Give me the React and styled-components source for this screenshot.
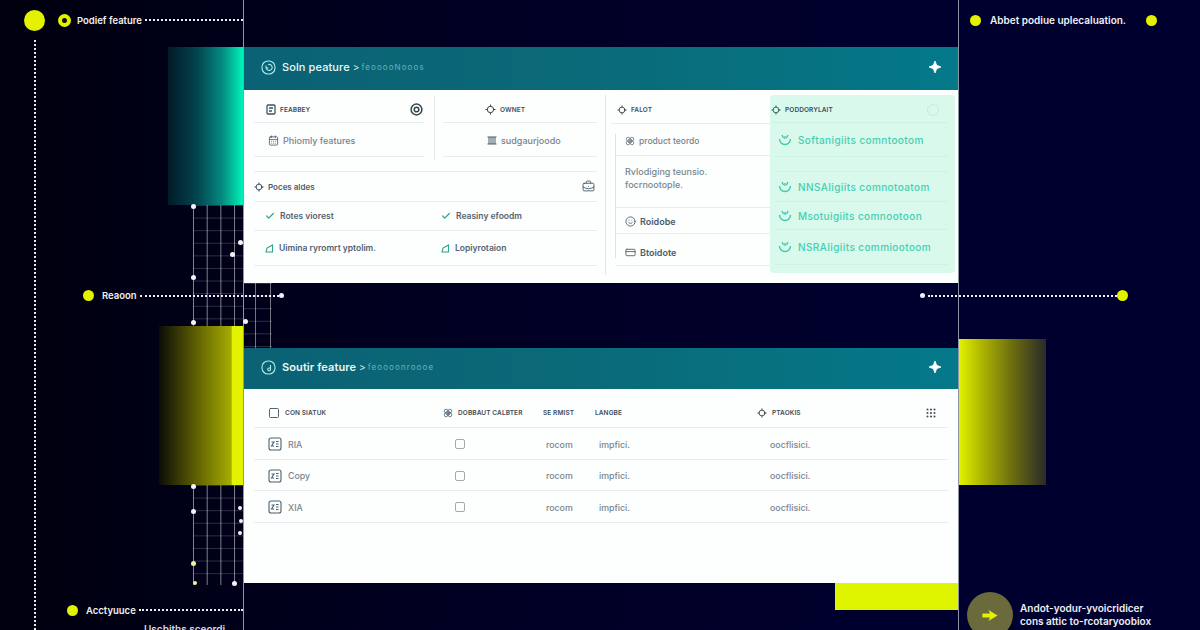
import React from 'react';
import styled, { createGlobalStyle } from 'styled-components';
import {
  BriefcaseBusiness,
  CalendarDays,
  Check,
  CreditCard,
  Flower,
  Grip,
  Locate,
  Smile,
  Square,
} from 'lucide-react';

const GlobalStyle = createGlobalStyle`
  html, body {
    margin: 0;
    padding: 0;
    background: #00001c;
  }
  * {
    box-sizing: border-box;
  }
`;

const Sparkle = () => (
  <svg width="12" height="12" viewBox="0 0 12 12">
    <path d="M6 0 L7.7 4.3 L12 6 L7.7 7.7 L6 12 L4.3 7.7 L0 6 L4.3 4.3 Z" fill="#fff" stroke="#fff" strokeWidth="0.8" strokeLinejoin="round" />
  </svg>
);

const HeaderGlyph = ({ spin }) => (
  <svg width="15" height="15" viewBox="0 0 15 15" fill="none" stroke="#a9ecec" strokeWidth="1.1">
    <rect x="1" y="1" width="13" height="13" rx="6" />
    {spin ? (
      <path d="M5 5.5 L5 8 L7.5 8 M5.2 7.8 A3 3 0 1 0 7.2 4.6" />
    ) : (
      <path d="M9.5 5 V9 A1.4 1.4 0 1 1 8.2 8 H9.5" />
    )}
  </svg>
);

const TargetGlyph = () => (
  <svg width="13" height="13" viewBox="0 0 13 13" fill="none" stroke="#34474f" strokeWidth="1.5">
    <circle cx="6.5" cy="6.5" r="5.4" />
    <circle cx="6.5" cy="6.5" r="2.3" />
  </svg>
);

const DocGlyph = () => (
  <svg width="10" height="11" viewBox="0 0 10 11" fill="none" stroke="#3e5361" strokeWidth="1.3">
    <rect x="1" y="1" width="8" height="9" rx="1" />
    <path d="M3 4 H7 M3 7 H6" />
  </svg>
);

const BarsGlyph = () => (
  <svg width="10" height="9" viewBox="0 0 10 9" fill="none" stroke="#4a5d6b" strokeWidth="1">
    <path d="M0.5 1 H9.5 M0.5 8 H9.5 M2 1 V8 M4 1 V8 M6 1 V8 M8 1 V8" />
  </svg>
);

const WedgeGlyph = () => (
  <svg width="9" height="9" viewBox="0 0 9 9" fill="none" stroke="#2fa58c" strokeWidth="1.1">
    <path d="M1 8 L2 4 L7.5 1 V8 Z" />
  </svg>
);

const MintGlyph = () => (
  <svg width="14" height="12" viewBox="0 0 14 12" fill="none" stroke="#3fcbab" strokeWidth="1.4">
    <path d="M1.5 5 A5.5 5.5 0 0 0 12.5 5" />
    <path d="M4 1 L5.5 4 M7 2 V5 M10 1 L8.5 4" />
  </svg>
);

const RowGlyph = () => (
  <svg width="14" height="14" viewBox="0 0 14 14" fill="none" stroke="#4b6070" strokeWidth="1.1">
    <rect x="1" y="1" width="12" height="12" rx="2" />
    <path d="M3.5 5 H6 L3.5 9 H6 M8 4.5 H10.5 M8 7 H10.5 M8 9.5 H10.5" />
  </svg>
);

const ArrowGlyph = () => (
  <svg width="18" height="13" viewBox="0 0 16 12">
    <path d="M1 4.2 H8 L6.6 1 L15 6 L6.6 11 L8 7.8 H1 Z" fill="#e3f200" />
  </svg>
);

const topMeshDots = [
  { x: 0, y: 1, s: 5 },
  { x: 0, y: 72, s: 5 },
  { x: 0, y: 117, s: 5 },
  { x: 47, y: 37, s: 5 },
  { x: 39, y: 49, s: 5 },
];

const bottomMeshDots = [
  { x: 0, y: 1, s: 5 },
  { x: 0, y: 26, s: 5 },
  { x: 47, y: 23, s: 4 },
  { x: 48, y: 36, s: 4 },
  { x: 47, y: 48, s: 4 },
  { x: 0, y: 78, s: 5, warm: true },
  { x: 2, y: 98, s: 4, warm: true },
  { x: 41, y: 98, s: 5 },
];

const mintRows = [
  { text: 'Softanigiits comntootom', h: 34 },
  { text: 'NNSAIigiits comnotoatom', h: 31, top: 14 },
  { text: 'Msotuigiits comnootoon', h: 28 },
  { text: 'NSRAIigiits commiootoom', h: 35 },
];

const tableRows = ['RIA', 'Copy', 'XIA'];

const App = () => (
  <Page>
    <GlobalStyle />

    <LeftRail>
      <VerticalDots />
      <TopNote>
        <BigDot />
        <RingDot />
        <NoteText>Podief feature</NoteText>
        <DotLine />
      </TopNote>
      <Glow $width={75} $height={158} $tone="teal" />
      <Mesh $width={50} $height={121}>
        {topMeshDots.map((d, i) => (
          <MeshDot key={i} $x={d.x} $y={d.y} $size={d.s} />
        ))}
      </Mesh>
      <Glow $width={84} $height={159} $tone="lime" />
      <Mesh $width={50} $height={100}>
        {bottomMeshDots.map((d, i) => (
          <MeshDot key={i} $x={d.x} $y={d.y} $size={d.s} $warm={d.warm} />
        ))}
      </Mesh>
      <BottomNote>
        <SmallDot />
        <NoteText>Acctyuuce</NoteText>
        <DotLine />
      </BottomNote>
      <ClippedNote>Uscbiths sceordi</ClippedNote>
    </LeftRail>

    <Center>
      <Card $height={236}>
        <CardHeader $height={43}>
          <HeaderGlyph spin />
          <CardTitle $weight={500}>Soln peature</CardTitle>
          <Crumb>&gt;</Crumb>
          <CrumbSub>feooooNooos</CrumbSub>
          <HeaderSparkle>
            <Sparkle />
          </HeaderSparkle>
        </CardHeader>
        <FeatureBody>
          <FeatureMain>
            <TopSplit>
              <SplitCell $divider>
                <Row $height={28} $inset={10}>
                  <DocGlyph />
                  <Caps>FEABBEY</Caps>
                  <RowEnd>
                    <TargetGlyph />
                  </RowEnd>
                </Row>
                <Row $height={34} $inset={10} $pad={14}>
                  <CalendarDays size={11} color="#4a5d6b" strokeWidth={1.8} />
                  <BodyText>Phiomly features</BodyText>
                </Row>
              </SplitCell>
              <SplitCell $pad={8}>
                <Row $height={28} $pad={42}>
                  <Locate size={11} color="#26343f" strokeWidth={2} />
                  <Caps>OWNET</Caps>
                </Row>
                <Row $height={34} $pad={44}>
                  <BarsGlyph />
                  <BodyText>sudgaurjoodo</BodyText>
                </Row>
              </SplitCell>
            </TopSplit>
            <SectionRow>
              <Locate size={10} color="#26343f" strokeWidth={2} />
              <SectionText>Poces aldes</SectionText>
              <RowEnd $right={2}>
                <BriefcaseBusiness size={13} color="#3e5361" strokeWidth={1.6} />
              </RowEnd>
            </SectionRow>
            <PairRow $height={29}>
              <PairCell>
                <Check size={10} color="#2fa58c" strokeWidth={3} />
                <PairText>Rotes viorest</PairText>
              </PairCell>
              <PairCell>
                <Check size={10} color="#2fa58c" strokeWidth={3} />
                <PairText>Reasiny efoodm</PairText>
              </PairCell>
            </PairRow>
            <PairRow $height={35}>
              <PairCell>
                <WedgeGlyph />
                <PairText>Uimina ryromrt yptolim.</PairText>
              </PairCell>
              <PairCell>
                <WedgeGlyph />
                <PairText>Lopiyrotaion</PairText>
              </PairCell>
            </PairRow>
          </FeatureMain>

          <FeatureMiddle>
            <Row $height={29} $pad={6}>
              <Locate size={10} color="#26343f" strokeWidth={2} />
              <Caps>FALOT</Caps>
            </Row>
            <MiddleInner>
              <Row $height={32} $pad={9}>
                <Flower size={10} color="#5a6a76" strokeWidth={1.8} />
                <MiddleText>product teordo</MiddleText>
              </Row>
              <MiddlePara>
                Rvlodiging teunsio.
                <br />
                focrnootople.
              </MiddlePara>
              <Row $height={26} $pad={9}>
                <Smile size={11} color="#3e5361" strokeWidth={1.8} />
                <DarkText>Roidobe</DarkText>
              </Row>
              <Row $height={32} $pad={9} $drop={5}>
                <CreditCard size={11} color="#3e5361" strokeWidth={1.8} />
                <DarkText>Btoidote</DarkText>
              </Row>
            </MiddleInner>
          </FeatureMiddle>

          <MintPanel>
            <MintHead>
              <Locate size={10} color="#1d4f4b" strokeWidth={2} />
              <Caps>PODDORYLAIT</Caps>
              <MintBadge />
            </MintHead>
            {mintRows.map((r) => (
              <MintRow key={r.text} $height={r.h} $top={r.top}>
                <MintGlyph />
                <MintText>{r.text}</MintText>
              </MintRow>
            ))}
          </MintPanel>
        </FeatureBody>
      </Card>

      <CardGap>
        <GapMesh>
          <MeshDot $x={1} $y={38} $size={5} />
        </GapMesh>
      </CardGap>

      <Card $height={235}>
        <CardHeader $height={41}>
          <HeaderGlyph />
          <CardTitle $weight={600}>Soutir feature</CardTitle>
          <Crumb>&gt;</Crumb>
          <CrumbSub>feoooonroooe</CrumbSub>
          <HeaderSparkle>
            <Sparkle />
          </HeaderSparkle>
        </CardHeader>
        <TableWrap>
          <TableHead>
            <HeadCell>
              <Square size={12} color="#3e5361" strokeWidth={1.8} />
              <Caps>CON SIATUK</Caps>
            </HeadCell>
            <HeadCell>
              <Flower size={10} color="#3e5361" strokeWidth={1.8} />
              <Caps>DOBBAUT CALBTER</Caps>
            </HeadCell>
            <HeadCell>
              <Caps>SE RMIST</Caps>
            </HeadCell>
            <HeadCell>
              <Caps>LANGBE</Caps>
            </HeadCell>
            <HeadCell>
              <Locate size={10} color="#26343f" strokeWidth={2} />
              <Caps>PTAOKIS</Caps>
            </HeadCell>
            <HeadCell>
              <Grip size={12} color="#3e5361" strokeWidth={2.2} />
            </HeadCell>
          </TableHead>
          {tableRows.map((name) => (
            <TableRow key={name}>
              <RowName>
                <RowGlyph />
                <span>{name}</span>
              </RowName>
              <CheckCell>
                <TickBox />
              </CheckCell>
              <RoomCell>rocom</RoomCell>
              <ImplCell>impfici.</ImplCell>
              <PlainCell>oocflisici.</PlainCell>
            </TableRow>
          ))}
        </TableWrap>
      </Card>

      <LimeBar />
    </Center>

    <RightRail>
      <RightTop>
        <SmallDot />
        <RightNote>Abbet podiue uplecaluation.</RightNote>
        <SmallDot />
      </RightTop>
      <Glow $width={87} $height={146} $tone="limeRight" />
      <FooterNote>
        <FooterCircle>
          <ArrowGlyph />
        </FooterCircle>
        <FooterText>
          Andot-yodur-yvoicridicer
          <br />
          cons attic to-rcotaryoobiox
        </FooterText>
      </FooterNote>
    </RightRail>

    <Callout $left={83} $width={201}>
      <SmallDot />
      <NoteText>Reaoon</NoteText>
      <DotLine />
      <TinyDot />
    </Callout>
    <Callout $left={920} $width={208}>
      <TinyDot />
      <DotLine />
      <SmallDot />
    </Callout>
  </Page>
);

export default App;

const Page = styled.div`
  position: relative;
  width: 1200px;
  height: 630px;
  overflow: hidden;
  display: grid;
  grid-template-columns: 243px 716px 241px;
  background: linear-gradient(90deg, #00000f 0%, #00001a 20%, #000026 45%, #00002e 75%, #00002f 100%);
  font-family: Inter, "Noto Sans", sans-serif;
`;

const LeftRail = styled.div`
  position: relative;
  display: flex;
  flex-direction: column;
  align-items: flex-end;
`;

const VerticalDots = styled.div`
  position: absolute;
  left: 34px;
  top: 40px;
  bottom: 0;
  border-left: 2px dotted #e8e8ee;
`;

const TopNote = styled.div`
  display: flex;
  align-items: center;
  width: 100%;
  height: 47px;
  padding: 0 0 7px 24px;
`;

const BigDot = styled.span`
  width: 21px;
  height: 21px;
  border-radius: 50%;
  background: #e3f200;
  flex: none;
  margin-right: 13px;
`;

const RingDot = styled.span`
  width: 13px;
  height: 13px;
  border-radius: 50%;
  border: 4.5px solid #e3f200;
  background: #111;
  flex: none;
  margin-right: 6px;
`;

const SmallDot = styled.span`
  width: 11px;
  height: 11px;
  border-radius: 50%;
  background: #e3f200;
  flex: none;
`;

const TinyDot = styled.span`
  width: 5px;
  height: 5px;
  border-radius: 50%;
  background: #f0f0ff;
  flex: none;
`;

const NoteText = styled.span`
  color: #f0f0f4;
  font-size: 9.5px;
  font-weight: 600;
  white-space: nowrap;
`;

const RightNote = styled(NoteText)`
  font-size: 10px;
`;

const DotLine = styled.span`
  flex: 1;
  height: 0;
  margin-left: 3px;
  border-top: 2px dotted #eeeef6;
`;

const glowTones = {
  teal: 'linear-gradient(90deg, #011a28 0%, #03464f 40%, #058a80 72%, #00e0ac 95%, #00f5c0 100%)',
  lime: 'linear-gradient(90deg, #0c0c08 0%, #5a5c02 42%, #a6ac00 86%, #e3f200 87%, #e3f200 100%)',
  limeRight: 'linear-gradient(90deg, #e3f200 0%, #b0b800 25%, #6e7010 60%, #2a2a28 100%)',
};

const Glow = styled.div`
  flex: none;
  width: ${(p) => p.$width}px;
  height: ${(p) => p.$height}px;
  background: ${(p) => glowTones[p.$tone]};
`;

const Mesh = styled.div`
  position: relative;
  flex: none;
  width: ${(p) => p.$width}px;
  height: ${(p) => p.$height}px;
  background-image:
    linear-gradient(to right, rgba(255, 255, 255, 0.5) 1px, transparent 1px),
    linear-gradient(to bottom, rgba(255, 255, 255, 0.18) 1px, transparent 1px);
  background-size: 13.7px 100%, 100% 12.6px;
`;

const MeshDot = styled.span`
  position: absolute;
  left: ${(p) => p.$x - 2}px;
  top: ${(p) => p.$y - 2}px;
  width: ${(p) => p.$size}px;
  height: ${(p) => p.$size}px;
  border-radius: 50%;
  background: ${(p) => (p.$warm ? '#f0f0a0' : '#f4f4f8')};
`;

const BottomNote = styled.div`
  display: flex;
  align-items: center;
  width: 100%;
  height: 16px;
  margin-top: 17px;
  padding-left: 67px;

  ${SmallDot} {
    margin-right: 8px;
  }
`;

const ClippedNote = styled.div`
  align-self: flex-start;
  margin: 5px 0 0 144px;
  color: #d8d8e0;
  font-size: 10px;
  font-weight: 600;
  white-space: nowrap;
`;

const Center = styled.div`
  display: flex;
  flex-direction: column;
  padding-top: 47px;
  border-left: 1px solid #8d95a6;
  border-right: 1px solid #8d95a6;
`;

const Card = styled.section`
  flex: none;
  display: flex;
  flex-direction: column;
  height: ${(p) => p.$height}px;
  background: #fdfefe;
`;

const CardHeader = styled.header`
  flex: none;
  display: flex;
  align-items: center;
  height: ${(p) => p.$height}px;
  padding: 0 17px 3px 17px;
  background: linear-gradient(90deg, #0a6274 0%, #0a6a78 50%, #04798a 100%);
`;

const CardTitle = styled.h2`
  margin: 0 0 0 6px;
  color: #ecf8f8;
  font-size: 11px;
  font-weight: ${(p) => p.$weight};
  letter-spacing: 0.1px;
`;

const Crumb = styled.span`
  margin-left: 3px;
  color: #d6eeee;
  font-size: 10px;
`;

const CrumbSub = styled.span`
  margin-left: 2px;
  color: #63b4bd;
  font-size: 8px;
  letter-spacing: 1.1px;
`;

const HeaderSparkle = styled.span`
  display: flex;
  margin-left: auto;
`;

const FeatureBody = styled.div`
  flex: 1;
  min-height: 0;
  display: grid;
  grid-template-columns: 361px 165px 188px;
`;

const FeatureMain = styled.div`
  padding: 5px 8px 0 10px;
`;

const TopSplit = styled.div`
  display: grid;
  grid-template-columns: 181px 162px;
  height: 65px;
  margin-bottom: 11px;
`;

const SplitCell = styled.div`
  padding-left: ${(p) => p.$pad || 0}px;
  border-right: ${(p) => (p.$divider ? '1px solid #e4e9ec' : 'none')};
`;

const Row = styled.div`
  display: flex;
  align-items: center;
  gap: 4px;
  height: ${(p) => p.$height}px;
  margin-right: ${(p) => p.$inset || 0}px;
  padding-left: ${(p) => p.$pad ?? 12}px;
  padding-top: ${(p) => p.$drop ?? 2}px;
  border-bottom: 1px solid #e8edef;
`;

const RowEnd = styled.span`
  display: flex;
  margin-left: auto;
  margin-right: ${(p) => p.$right ?? 1}px;
`;

const Caps = styled.span`
  color: #3c4d5a;
  font-size: 6.5px;
  font-weight: 600;
  letter-spacing: 0.1px;
  white-space: nowrap;
`;

const BodyText = styled.span`
  color: #75838e;
  font-size: 9px;
  font-weight: 500;
  white-space: nowrap;
`;

const MiddleText = styled(BodyText)`
  font-size: 8.5px;
`;

const DarkText = styled(BodyText)`
  color: #4c5c68;
  font-weight: 600;
`;

const SectionRow = styled.div`
  display: flex;
  align-items: center;
  gap: 4px;
  height: 31px;
  border-top: 1px solid #e8edef;
  border-bottom: 1px solid #e8edef;
`;

const SectionText = styled.span`
  color: #4c5c68;
  font-size: 8px;
  font-weight: 600;
`;

const PairRow = styled.div`
  display: grid;
  grid-template-columns: 176px 1fr;
  height: ${(p) => p.$height}px;
  padding-left: 11px;
  border-bottom: 1px solid #e8edef;
`;

const PairCell = styled.div`
  display: flex;
  align-items: center;
  gap: 5px;
`;

const PairText = styled.span`
  color: #526371;
  font-size: 8.5px;
  font-weight: 600;
  white-space: nowrap;
`;

const FeatureMiddle = styled.div`
  margin-top: 5px;
  height: 180px;
  padding-left: 5px;
  border-left: 1px solid #e0e6e9;
`;

const MiddleInner = styled.div`
  position: relative;
  margin-left: 5px;

  &::before {
    content: '';
    position: absolute;
    left: -1px;
    top: 10px;
    bottom: 8px;
    border-left: 1px solid #dde3e6;
  }
`;

const MiddlePara = styled.p`
  height: 52px;
  margin: 0;
  padding: 9px 0 0 9px;
  color: #78868f;
  font-size: 9px;
  font-weight: 500;
  line-height: 13px;
  border-bottom: 1px solid #e8edef;
`;

const MintPanel = styled.aside`
  margin: 5px 3px 10px 0;
  border-radius: 4px;
  background: #d9f9ec;
`;

const MintHead = styled.div`
  display: flex;
  align-items: center;
  gap: 4px;
  height: 28px;
  margin: 0 8px 0 1px;
  padding-top: 2px;
  border-bottom: 1px solid #cdf2e3;
`;

const MintBadge = styled.span`
  width: 12px;
  height: 12px;
  margin: 0 8px 0 auto;
  border: 1px solid #c3eedd;
  border-radius: 50%;
`;

const MintRow = styled.div`
  display: flex;
  align-items: center;
  gap: 6px;
  height: ${(p) => p.$height}px;
  margin: ${(p) => p.$top || 0}px 8px 0 5px;
  padding-left: 3px;
  border-bottom: 1px solid #cdf2e3;
  border-top: ${(p) => (p.$top ? '1px solid #cdf2e3' : 'none')};
`;

const MintText = styled.span`
  color: #45cfb0;
  font-size: 10px;
  font-weight: 500;
  letter-spacing: 0.4px;
  white-space: nowrap;
`;

const CardGap = styled.div`
  flex: none;
  height: 65px;
  background: transparent;
`;

const GapMesh = styled.div`
  position: relative;
  width: 28px;
  height: 100%;
  background-image:
    linear-gradient(to right, rgba(255, 255, 255, 0.45) 1px, transparent 1px),
    linear-gradient(to bottom, rgba(255, 255, 255, 0.18) 1px, transparent 1px);
  background-position: 11px 0, 0 0;
  background-size: 15px 100%, 100% 12.6px;
`;

const TableWrap = styled.div`
  padding: 0 10px;
`;

const tableColumns = '175px 100px 52px 162px 168px 1fr';

const TableHead = styled.div`
  display: grid;
  grid-template-columns: ${tableColumns};
  height: 39px;
  padding: 10px 0 0 14px;
  border-bottom: 1px solid #e8edef;
`;

const HeadCell = styled.div`
  display: flex;
  align-items: center;
  gap: 5px;
  min-width: 0;
`;

const TableRow = styled.div`
  display: grid;
  grid-template-columns: ${tableColumns};
  align-items: center;
  height: 31.5px;
  padding: 2px 0 0 14px;
  color: #79868f;
  font-size: 8.8px;
  font-weight: 500;
  border-bottom: 1px solid #e8edef;
`;

const RowName = styled.div`
  display: flex;
  align-items: center;
  gap: 6px;
`;

const CheckCell = styled.div`
  padding-left: 12px;
`;

const TickBox = styled.div`
  width: 10px;
  height: 10px;
  border: 1.2px solid #9fabb3;
  border-radius: 2px;
`;

const RoomCell = styled.div`
  padding-left: 3px;
`;

const ImplCell = styled.div`
  padding-left: 4px;
`;

const PlainCell = styled.div`
  padding-left: 13px;
`;

const LimeBar = styled.div`
  flex: none;
  align-self: flex-end;
  width: 123px;
  height: 27px;
  background: #dff500;
`;

const RightRail = styled.div`
  display: flex;
  flex-direction: column;
  align-items: flex-start;
`;

const RightTop = styled.div`
  display: flex;
  align-items: center;
  gap: 9px;
  width: 100%;
  height: 40px;
  margin-bottom: 299px;
  padding-left: 11px;

  ${SmallDot}:last-child {
    margin-left: 11px;
  }
`;

const FooterNote = styled.div`
  display: flex;
  gap: 7px;
  margin-top: 107px;
  padding-left: 8px;
`;

const FooterCircle = styled.div`
  display: flex;
  align-items: center;
  justify-content: center;
  flex: none;
  width: 46px;
  height: 46px;
  border-radius: 50%;
  background: #6a6a3c;
`;

const FooterText = styled.div`
  padding-top: 10px;
  color: #eeeef4;
  font-size: 10px;
  font-weight: 600;
  line-height: 13px;
  white-space: nowrap;
`;

const Callout = styled.div`
  position: absolute;
  top: 290px;
  left: ${(p) => p.$left}px;
  width: ${(p) => p.$width}px;
  height: 11px;
  display: flex;
  align-items: center;

  ${NoteText} {
    margin-left: 8px;
  }
`;
